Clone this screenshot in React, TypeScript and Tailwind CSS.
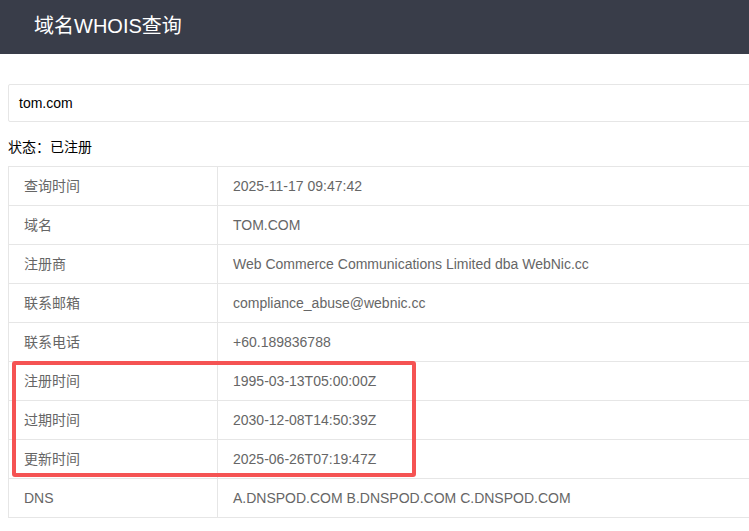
import React from 'react';

const rows: [string, string][] = [
  ['查询时间', '2025-11-17 09:47:42'],
  ['域名', 'TOM.COM'],
  ['注册商', 'Web Commerce Communications Limited dba WebNic.cc'],
  ['联系邮箱', 'compliance_abuse@webnic.cc'],
  ['联系电话', '+60.189836788'],
];

const dates: [string, string][] = [
  ['注册时间', '1995-03-13T05:00:00Z'],
  ['过期时间', '2030-12-08T14:50:39Z'],
  ['更新时间', '2025-06-26T07:19:47Z'],
];

function Row({ label, value }: { label: string; value: string }) {
  return (
    <div className="grid grid-cols-[209px_1fr] border-b border-[#e6e6e6]">
      <div className="border-r border-[#e6e6e6] px-[15px] py-[9px] leading-5">{label}</div>
      <div className="px-[15px] py-[9px] leading-5 whitespace-nowrap">{value}</div>
    </div>
  );
}

export default function App() {
  return (
    <div
      className="w-[749px] h-[531px] overflow-hidden bg-white"
      style={{ fontFamily: '"Liberation Sans", "Noto Sans CJK SC", sans-serif' }}
    >
      <header className="h-[54px] bg-[#393d49] flex items-center pl-[34px]">
        <h1 className="text-white text-[20px] leading-none pb-[2px]">域名WHOIS查询</h1>
      </header>

      <div className="w-[900px] pl-[8px] pt-[30px]">
        <div className="h-[38px] border border-[#e6e6e6] rounded-[2px] flex items-center pl-[10px] text-[14px] text-black">
          tom.com
        </div>

        <p className="mt-[15px] text-[14px] text-black leading-5">状态：已注册</p>

        <div className="mt-[9px] border-t border-l border-[#e6e6e6] text-[14px] text-[#666]">
          {rows.map(([l, v]) => (
            <Row key={l} label={l} value={v} />
          ))}
          <div className="relative">
            {dates.map(([l, v]) => (
              <Row key={l} label={l} value={v} />
            ))}
            <div className="absolute left-[3px] top-[-1px] w-[404px] h-[116px] border-4 border-[#f55353] rounded-[3px] pointer-events-none" />
          </div>
          <Row label="DNS" value="A.DNSPOD.COM B.DNSPOD.COM C.DNSPOD.COM" />
        </div>
      </div>
    </div>
  );
}
